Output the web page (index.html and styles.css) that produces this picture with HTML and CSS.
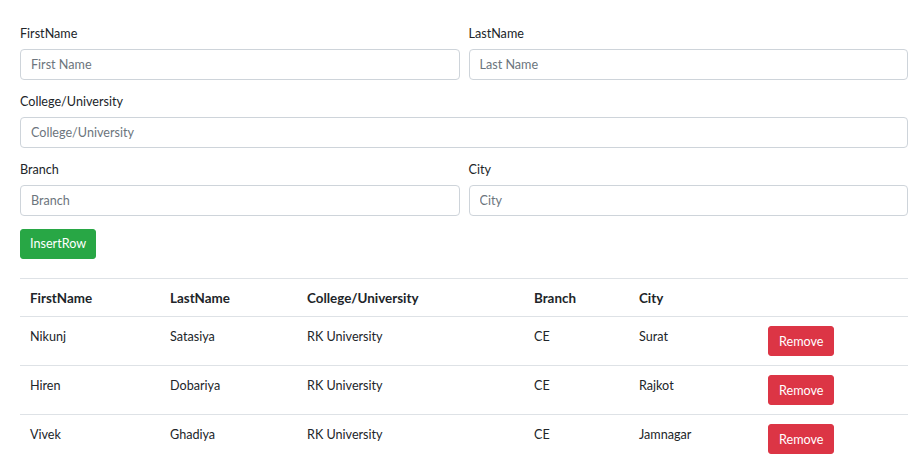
FILE: index.html
```html
<!DOCTYPE html>
<html>
<head>
<meta charset="utf-8">
<link rel="stylesheet" href="styles.css">
</head>
<body>
<div class="container">
  <form class="form">
    <div class="row">
      <div class="group">
        <label class="label">FirstName</label>
        <input class="input" placeholder="First Name">
      </div>
      <div class="group">
        <label class="label">LastName</label>
        <input class="input" placeholder="Last Name">
      </div>
    </div>
    <div class="row">
      <div class="group">
        <label class="label">College/University</label>
        <input class="input" placeholder="College/University">
      </div>
    </div>
    <div class="row">
      <div class="group">
        <label class="label">Branch</label>
        <input class="input" placeholder="Branch">
      </div>
      <div class="group">
        <label class="label">City</label>
        <input class="input" placeholder="City">
      </div>
    </div>
    <button type="button" class="btn btn-green">InsertRow</button>
  </form>
  <table class="table">
    <colgroup>
      <col style="width:140px"><col style="width:137px"><col style="width:227px"><col style="width:105px"><col style="width:129px"><col>
    </colgroup>
    <thead>
      <tr><th>FirstName</th><th>LastName</th><th>College/University</th><th>Branch</th><th>City</th><th></th></tr>
    </thead>
    <tbody>
      <tr><td>Nikunj</td><td>Satasiya</td><td>RK University</td><td>CE</td><td>Surat</td><td><button type="button" class="btn btn-red">Remove</button></td></tr>
      <tr><td>Hiren</td><td>Dobariya</td><td>RK University</td><td>CE</td><td>Rajkot</td><td><button type="button" class="btn btn-red">Remove</button></td></tr>
      <tr><td>Vivek</td><td>Ghadiya</td><td>RK University</td><td>CE</td><td>Jamnagar</td><td><button type="button" class="btn btn-red">Remove</button></td></tr>
    </tbody>
  </table>
</div>
</body>
</html>
```
FILE: styles.css
```css
* { box-sizing: border-box; }
html, body { margin: 0; padding: 0; background: #fff; }
body {
  font-family: "Lato", "Noto Sans", sans-serif;
  font-size: 12.6px;
  color: #212529;
  line-height: 1.5;
}
.container { padding: 24px 12px 0 20px; width: 920px; }
.row { display: flex; gap: 9px; margin-bottom: 12px; }
.group { flex: 1; display: flex; flex-direction: column; }
.label { display: block; line-height: 20px; margin-bottom: 5px; }
.input {
  height: 31px;
  border: 1px solid #ced4da;
  border-radius: 4px;
  padding: 4px 10px;
  font: inherit;
  color: #495057;
  outline: none;
}
.input::placeholder { color: #6c757d; opacity: 1; }
.btn {
  display: inline-block;
  border: 1px solid transparent;
  border-radius: 3px;
  height: 30px;
  font: inherit;
  color: #fff;
  padding: 0 9px;
  cursor: pointer;
}
.btn-green { background: #28a745; border-color: #28a745; margin-top: 1px; }
.btn-red { background: #dc3545; border-color: #dc3545; vertical-align: top; padding: 2px 10px 0; }
.table {
  margin-top: 19px;
  width: 888px;
  border-collapse: collapse;
}
.table th, .table td {
  text-align: left;
  vertical-align: top;
  padding: 9px 10px;
  border-top: 1px solid #dee2e6;
  line-height: 20px;
}
.table th { font-weight: 700; font-size: 13.4px; padding: 9px 10px 8px; }
.table td { padding: 9px 10px 9px; height: 49px; }
.table td.cell, .table td { padding-top: 9px; }
.table td:not(:last-child) { padding-top: 10px; padding-bottom: 8px; }
```
